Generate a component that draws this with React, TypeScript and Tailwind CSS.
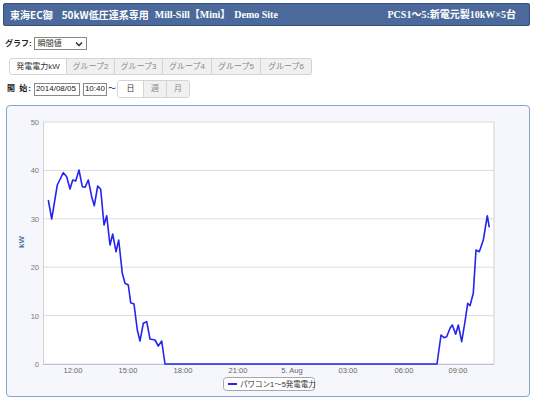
import React from "react";

const pts: [number, number][] = [
  [48.3, 200], [51.7, 219], [57.3, 185], [63.3, 172.7], [66.7, 176.7], [70, 189], [72.7, 180], [75.7, 181],
  [79, 170], [82.3, 186.7], [85, 187.3], [88.3, 180], [91.7, 196.7], [94.3, 205.7], [97.7, 186], [100.7, 189.3],
  [104, 225], [106.7, 215.7], [110, 245], [112.7, 234], [116, 251.7], [118.7, 240], [122.3, 273.3], [125, 283.3],
  [128.3, 285], [130.7, 302.7], [134, 304], [137.3, 330], [140, 341], [143.3, 323.3], [146.7, 321.7], [150, 339],
  [155, 340], [158.3, 346], [161.7, 341], [165, 364], [437, 364], [441, 335], [444, 337.7], [446.7, 336.7],
  [450, 328.3], [452.3, 325], [455.7, 334.3], [458.3, 325], [461.7, 341.7], [465, 321.7], [467.7, 303.3],
  [470, 305.7], [473.3, 293.3], [476, 250], [479.3, 251.7], [483.3, 240], [487.3, 215.7], [489.3, 227.3],
];

const yTicks = [50, 40, 30, 20, 10, 0];
const xTicks: [number, string][] = [
  [73, "12:00"], [128, "15:00"], [183, "18:00"], [238, "21:00"], [292, "5. Aug"], [348, "03:00"], [404, "06:00"], [458, "09:00"],
];

function Chart() {
  const top = 122;
  const step = 48.4;
  return (
    <svg width={522} height={290} viewBox="7 106 522 290" className="block">
      <rect x={43} y={122} width={451} height={242} fill="#ffffff" />
      {yTicks.map((v, i) => (
        <g key={v}>
          <line x1={43} x2={494} y1={top + i * step} y2={top + i * step} stroke="#dcdcdc" strokeWidth={1} />
          <text x={39} y={top + i * step + 3} textAnchor="end" fontSize={7.5} fill="#777" fontFamily="'Liberation Sans', sans-serif">
            {v}
          </text>
        </g>
      ))}
      <line x1={43.5} x2={43.5} y1={122} y2={364} stroke="#d0d0d0" strokeWidth={1} />
      <line x1={494} x2={494} y1={122} y2={364} stroke="#d0d0d0" strokeWidth={1} />
      <line x1={43} x2={494} y1={364.5} y2={364.5} stroke="#b8c4d8" strokeWidth={1} />
      {xTicks.map(([x, t]) => (
        <text key={t} x={x} y={373} textAnchor="middle" fontSize={7.5} fill="#666" fontFamily="'Liberation Sans', sans-serif">
          {t}
        </text>
      ))}
      <text x={24} y={242} transform="rotate(-90 24 242)" textAnchor="middle" fontSize={8} fontWeight="bold" fill="#4d6fa3" fontFamily="'Liberation Sans', sans-serif">
        kW
      </text>
      <polyline
        points={pts.map((p) => p.join(",")).join(" ")}
        fill="none"
        stroke="#2424f0"
        strokeWidth={1.6}
        strokeLinejoin="round"
      />
      <rect x={223.5} y={377.5} width={91} height={13} rx={3} fill="#ffffff" stroke="#a8a8a8" strokeWidth={1} />
      <line x1={228} x2={237} y1={384} y2={384} stroke="#2424f0" strokeWidth={2} />
      <text x={240} y={387} fontSize={7.5} fill="#333" fontFamily="'Liberation Sans', 'Noto Sans CJK JP', sans-serif">
        パワコン1～5発電電力
      </text>
    </svg>
  );
}

export default function App() {
  const tabs = ["発電電力kW", "グループ2", "グループ3", "グループ4", "グループ5", "グループ6"];
  const tabW = ["w-[58px]", "w-[48px]", "w-[48px]", "w-[49px]", "w-[49px]", "w-[51px]"];
  return (
    <div className="w-[533px] h-[400px] bg-white overflow-hidden font-['Liberation_Sans','Noto_Sans_CJK_JP',sans-serif] text-[#333]">
      <div className="mx-[3px] mt-[3px] h-[23px] bg-[#4b6a9b] border border-[#34507c] rounded-[2px] flex items-center justify-between pl-[6px] pr-[13px] text-white font-bold text-[10px] font-['Liberation_Serif','Noto_Sans_CJK_JP',serif]">
        <div className="flex items-center">
          <span className="font-['Noto_Sans_CJK_JP',sans-serif] font-semibold">東海EC御</span>
          <span className="ml-[9px] font-['Noto_Sans_CJK_JP',sans-serif] font-semibold">50kW低圧連系専用</span>
          <span className="ml-[6px]">Mill-Sill【Mini】</span>
          <span className="ml-[4px]">Demo Site</span>
        </div>
        <span>PCS1～5:新電元製10kW×5台</span>
      </div>

      <div className="flex items-center h-[13px] mt-[11px] pl-[5px]">
        <span className="text-[8px] font-bold text-[#222]">グラフ:</span>
        <div className="ml-[2px] w-[53px] h-[13px] border border-[#888] flex items-center justify-between px-[3px] bg-white">
          <span className="text-[8px] text-[#333]">瞬間値</span>
          <svg width="8" height="6" viewBox="0 0 8 6">
            <path d="M1 1.5 L4 4.5 L7 1.5" fill="none" stroke="#222" strokeWidth="1.3" />
          </svg>
        </div>
      </div>

      <div className="flex mt-[8px] ml-[9px] h-[17px]">
        {tabs.map((t, i) => (
          <div
            key={t}
            className={`${tabW[i]} h-[17px] flex items-center justify-center text-[8px] border-y border-r border-[#d4d4d4] ${
              i === 0 ? "bg-white text-[#333] border-l rounded-l-[3px]" : "bg-[#f0f0f0] text-[#888]"
            } ${i === tabs.length - 1 ? "rounded-r-[3px]" : ""}`}
          >
            {t}
          </div>
        ))}
      </div>

      <div className="flex items-center mt-[5px] ml-[7px] h-[18px]">
        <span className="text-[8px] font-bold text-[#222] tracking-[1px]">開 始:</span>
        <div className="ml-[2px] w-[46px] h-[13px] border border-[#888] flex items-center pl-[1px] text-[8px] text-[#222] bg-white">2014/08/05</div>
        <div className="ml-[3px] w-[24px] h-[13px] border border-[#888] flex items-center pl-[1px] text-[8px] text-[#222] bg-white">10:40</div>
        <span className="text-[8px] text-[#222] ml-[1px]">～</span>
        <div className="ml-[1px] flex h-[18px] border border-[#d4d4d4] rounded-[3px] overflow-hidden">
          <div className="w-[25px] flex items-center justify-center text-[8px] bg-white text-[#333]">日</div>
          <div className="w-[23px] flex items-center justify-center text-[8px] bg-[#f0f0f0] text-[#888] border-l border-[#d4d4d4]">週</div>
          <div className="w-[23px] flex items-center justify-center text-[8px] bg-[#f0f0f0] text-[#888] border-l border-[#d4d4d4]">月</div>
        </div>
      </div>

      <div className="ml-[6px] mt-[7px] w-[524px] h-[292px] border border-[#86a4d2] rounded-[4px] bg-[#f6f7fc] overflow-hidden">
        <Chart />
      </div>
    </div>
  );
}
